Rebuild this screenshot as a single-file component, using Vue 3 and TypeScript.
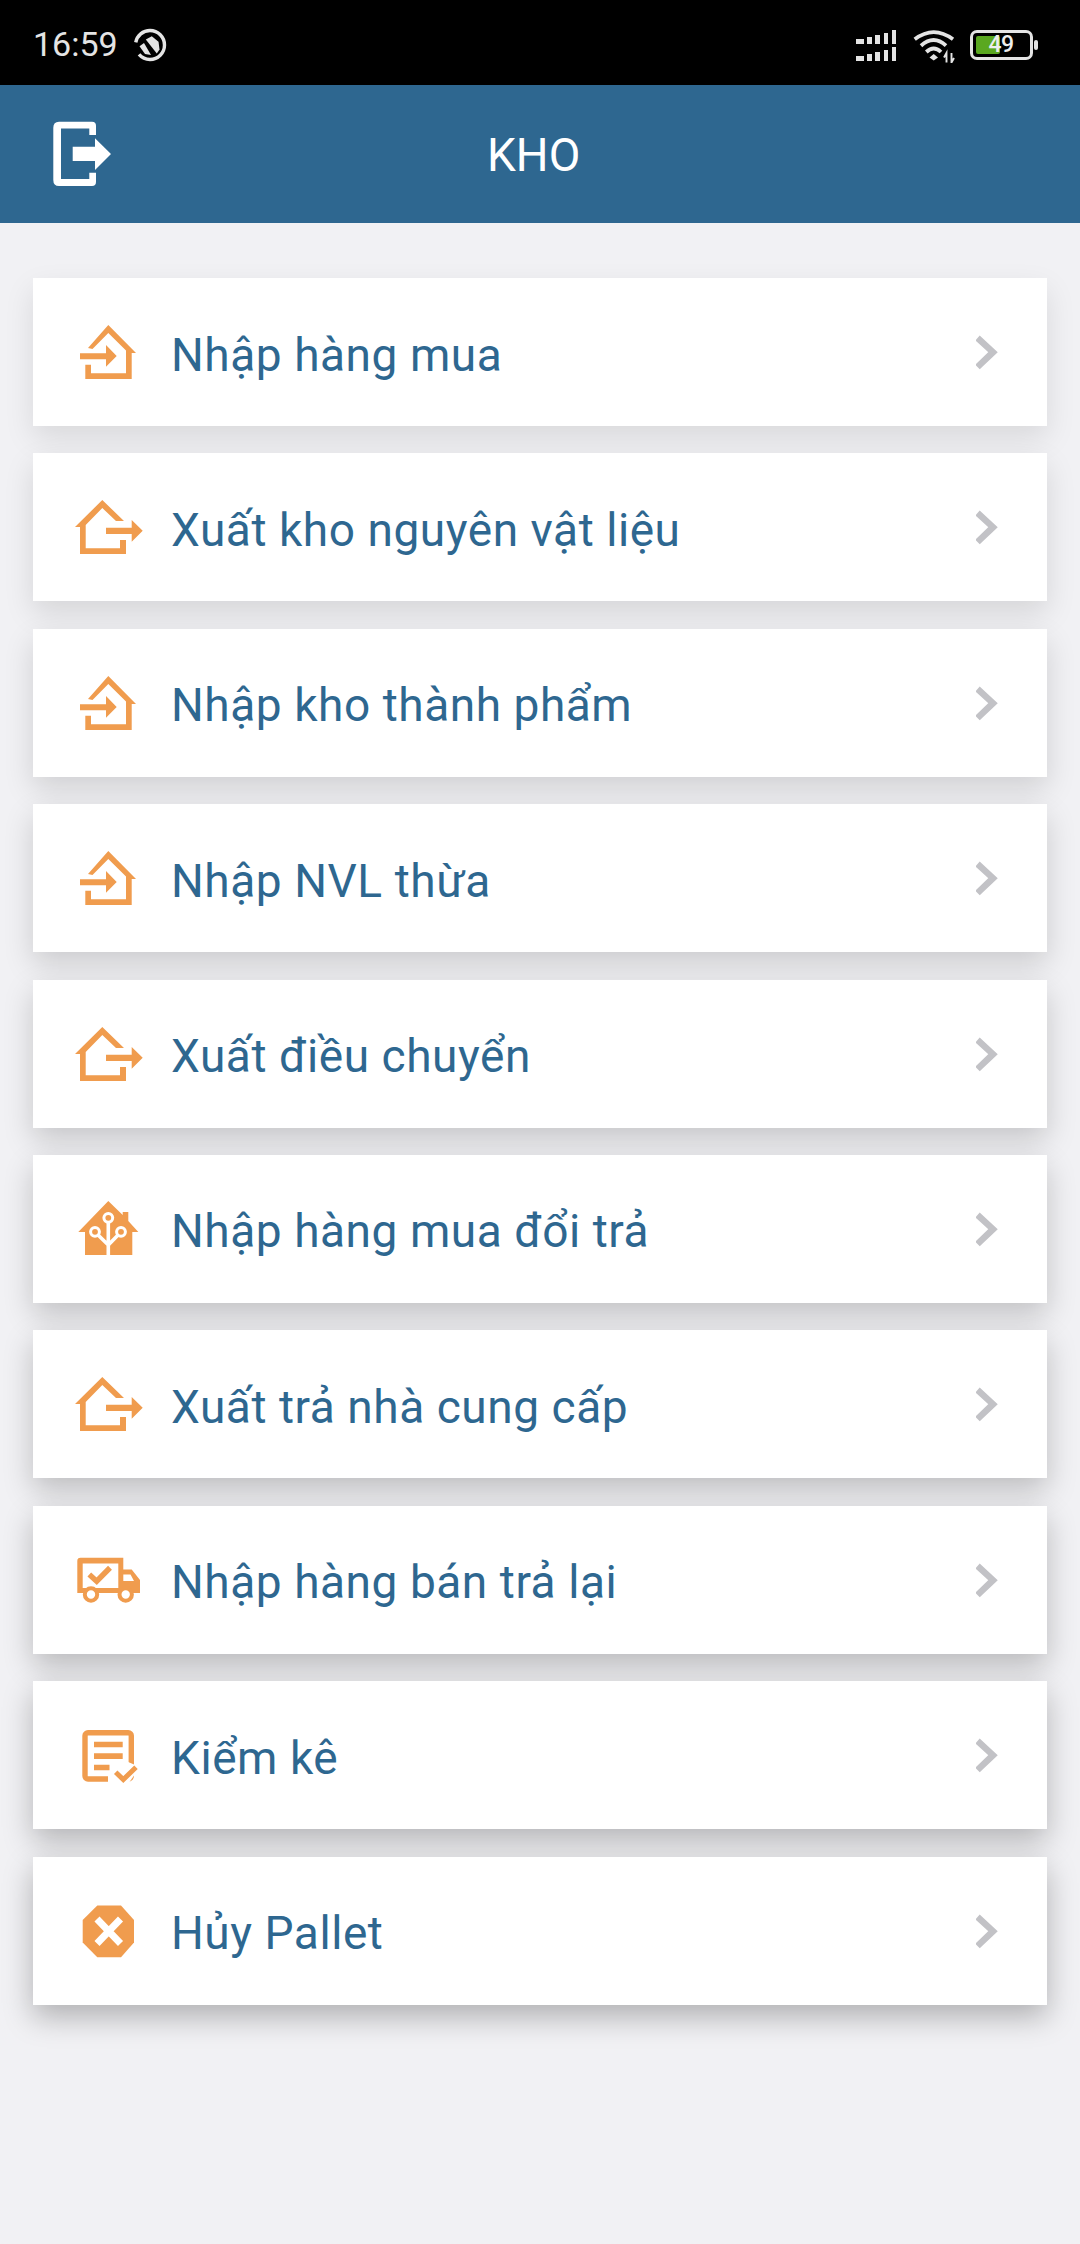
<script setup lang="ts">
type Kind = "in" | "out" | "home" | "truck" | "check" | "cancel";

const items: { label: string; icon: Kind }[] = [
  { label: "Nhập hàng mua", icon: "in" },
  { label: "Xuất kho nguyên vật liệu", icon: "out" },
  { label: "Nhập kho thành phẩm", icon: "in" },
  { label: "Nhập NVL thừa", icon: "in" },
  { label: "Xuất điều chuyển", icon: "out" },
  { label: "Nhập hàng mua đổi trả", icon: "home" },
  { label: "Xuất trả nhà cung cấp", icon: "out" },
  { label: "Nhập hàng bán trả lại", icon: "truck" },
  { label: "Kiểm kê", icon: "check" },
  { label: "Hủy Pallet", icon: "cancel" },
];

const bars = [0, 1, 2, 3, 4];

// shadows get heavier towards the bottom of the list
const shade = (i: number) => ({ "--shade": (0.1 + 0.019 * i).toFixed(3) });
</script>

<template>
  <div class="screen">
    <div class="status">
      <div class="status-left">
        <span class="time">16:59</span>
        <svg class="dnd" viewBox="0 0 34 34" width="34" height="34">
          <circle cx="17" cy="17" r="14.5" fill="none" stroke="#e4e4e4" stroke-width="3.4" stroke-dasharray="78 13" stroke-dashoffset="-48" />
          <path d="M12.8 11.5 L18.8 8.2 L25.5 13.8 L26.5 21.5 L23.8 25.5 Z" fill="#e4e4e4" />
          <path d="M6.5 18.2 L11 15 L18 27 L12 26 Z" fill="#e4e4e4" />
        </svg>
      </div>
      <div class="status-right">
        <div class="signal">
          <div v-for="row in 2" :key="row" class="signal-row">
            <i v-for="b in bars" :key="b" :class="'bar-' + b"></i>
          </div>
        </div>
        <svg class="wifi" viewBox="0 0 42 33" width="42" height="33">
          <path d="M1.7 9.3 Q20.7 -5 40 9.3" fill="none" stroke="#e4e4e4" stroke-width="3.8" />
          <path d="M8 15.7 Q20.7 4.5 33 15.7" fill="none" stroke="#e4e4e4" stroke-width="3.8" />
          <path d="M13.3 22 Q20.7 15 28 22" fill="none" stroke="#e4e4e4" stroke-width="3.8" />
          <path d="M16.5 27.5 L20.7 24 L25 27.5 L20.7 30.5 Z" fill="#e4e4e4" />
          <path d="M33.5 32.5 V23 L31 27.5 M38.5 23 V32.5 L41 28" fill="none" stroke="#e4e4e4" stroke-width="1.9" />
        </svg>
        <div class="battery">
          <div class="battery-body">
            <div class="battery-fill"></div>
            <span class="battery-num">49</span>
          </div>
          <div class="battery-tip"></div>
        </div>
      </div>
    </div>

    <header class="topbar">
      <svg class="logout" viewBox="0 0 60 66" width="60" height="66">
        <path d="M7 .7 H40 Q44 .7 44 4.7 V14 H37.3 V7.5 H9 V58 H37.3 V51.7 H44 V61 Q44 65 40 65 H7 Q1.3 65 1.3 59 V6.7 Q1.3 .7 7 .7 Z" fill="#fff" />
        <path d="M20.7 25.7 H43 V17.3 L59 33 L43 49 V40 H20.7 Z" fill="#fff" />
      </svg>
      <h1 class="title">KHO</h1>
    </header>

    <main class="list">
      <div v-for="(item, i) in items" :key="item.label" class="card" :style="shade(i)">
        <svg class="icon" viewBox="0 0 80 80" width="80" height="80">
          <g v-if="item.icon === 'in'" fill="#f09c4e">
            <path d="M18 36 L38.3 13 L66 41 H61.7 V67 H15.3 V52.7 H21 V61.3 H56 V38.5 L38.3 21 L22.5 37 Z" />
            <path d="M10 41.3 H36 V33 L46.7 44 L36 54.7 V47.3 H10 Z" />
          </g>
          <g v-else-if="item.icon === 'out'" fill="#f09c4e">
            <path d="M5 40 L32.3 13 L54 34 H46 L32.3 21 L15.7 38 V61.3 H50 V53 H56 V67 H10 V40 Z" />
            <path d="M36 40.7 H61.7 V33 L72.7 43.7 L61.7 54.7 V47 H36 Z" />
          </g>
          <g v-else-if="item.icon === 'home'">
            <path d="M38.3 12 L52.7 26 V23 H58.3 V32 L68.3 43 H62.3 V66 H15 V43 H8.3 Z" fill="#f09c4e" />
            <path d="M38.3 29 V66 M25 43 L38.3 56 M51 43 L38.3 56" fill="none" stroke="#fff" stroke-width="3.6" />
            <circle cx="38.3" cy="28.8" r="4.4" fill="#f09c4e" stroke="#fff" stroke-width="3" />
            <circle cx="25" cy="42.8" r="4.4" fill="#f09c4e" stroke="#fff" stroke-width="3" />
            <circle cx="51" cy="42.8" r="4.4" fill="#f09c4e" stroke="#fff" stroke-width="3" />
          </g>
          <g v-else-if="item.icon === 'truck'">
            <path d="M10.5 17.8 H53.3 V29.5 H61.7 L70 40 V53 H7.3 V21 Q7.3 17.8 10.5 17.8 Z" fill="#f09c4e" />
            <path d="M12.7 23.5 H48.3 V48 H12.7 Z" fill="#fff" />
            <path d="M53.3 34.5 H60.5 L64 41 H53.3 Z" fill="#fff" />
            <path d="M19.3 34.5 L26.7 41.2 L40 27.8" fill="none" stroke="#f09c4e" stroke-width="5.5" />
            <circle cx="21" cy="54.5" r="6.2" fill="#fff" stroke="#f09c4e" stroke-width="4" />
            <circle cx="55.7" cy="54.5" r="6.2" fill="#fff" stroke="#f09c4e" stroke-width="4" />
          </g>
          <g v-else-if="item.icon === 'check'">
            <rect x="15" y="17.7" width="46.3" height="46.3" rx="3" fill="none" stroke="#f09c4e" stroke-width="5.4" />
            <path d="M24 26.7 H52.7 V32.3 H24 Z M24 38.3 H52.7 V44 H24 Z M24 49.7 H39.5 V55.3 H24 Z" fill="#f09c4e" />
            <path d="M38 58 L51 44 L70 52 L56 72 H38 Z" fill="#fff" />
            <path d="M45.7 57.3 L53.3 64.5 L66 52.3" fill="none" stroke="#f09c4e" stroke-width="5" />
          </g>
          <g v-else>
            <path d="M27.3 14.5 H51 L64 29 V51.5 L51 66.2 H27.3 L12.7 51.5 V29 Z" fill="#f09c4e" />
            <path d="M27 28 L50.5 52.5 M50.5 28 L27 52.5" fill="none" stroke="#fff" stroke-width="7" />
          </g>
        </svg>
        <span class="label">{{ item.label }}</span>
        <svg class="chevron" viewBox="0 0 24 36" width="24" height="36">
          <path d="M1.5 4 L17 18.2 L1.5 33" fill="none" stroke="#c2c2c6" stroke-width="6.5" />
        </svg>
      </div>
    </main>
  </div>
</template>

<style scoped>
.screen {
  width: 1080px;
  height: 2244px;
  background: #f1f1f4;
  font-family: Roboto, "Noto Sans", sans-serif;
  overflow: hidden;
}

.status {
  height: 85px;
  background: #000;
  display: flex;
  align-items: center;
  justify-content: space-between;
  padding: 0 42px 0 33px;
  box-sizing: border-box;
}

.status-left,
.status-right {
  display: flex;
  align-items: center;
}

.time {
  color: #e4e4e4;
  font-size: 34px;
  line-height: 1;
  margin-right: 15px;
  margin-top: 2px;
}

.dnd {
  margin-top: 4px;
}

.signal {
  display: flex;
  flex-direction: column;
  gap: 3.7px;
  margin-right: 16.7px;
  margin-top: 6px;
}

.signal-row {
  display: flex;
  align-items: flex-end;
  gap: 3.5px;
}

.signal-row i {
  display: block;
  width: 4.5px;
  background: #e4e4e4;
}

.signal-row .bar-0 {
  width: 8px;
  height: 4.6px;
}

.signal-row .bar-1 {
  height: 7px;
}

.signal-row .bar-2 {
  width: 5px;
  height: 9px;
}

.signal-row .bar-3 {
  height: 11px;
}

.signal-row .bar-4 {
  height: 13.3px;
}

.wifi {
  margin-right: 15px;
  margin-top: 7px;
}

.battery {
  display: flex;
  align-items: center;
  gap: 1.3px;
  margin-top: 5px;
}

.battery-body {
  position: relative;
  width: 62.7px;
  height: 30px;
  box-sizing: border-box;
  border: 3.3px solid #e4e4e4;
  border-radius: 7px;
  padding: 3.4px;
}

.battery-fill {
  width: 23.3px;
  height: 100%;
  background: #5aa820;
  border-radius: 2px;
}

.battery-num {
  position: absolute;
  left: 15.5px;
  top: 1px;
  color: #eeeeee;
  font-size: 23px;
  font-weight: 500;
  letter-spacing: -0.5px;
  line-height: 22px;
}

.battery-tip {
  width: 4px;
  height: 10px;
  background: #e4e4e4;
  border-radius: 2px;
}

.topbar {
  height: 138px;
  background: #2e6790;
  display: flex;
  align-items: center;
  padding-left: 52px;
  box-sizing: border-box;
}

.title {
  margin: 2px 0 0 375px;
  color: #fff;
  font-size: 46px;
  font-weight: 400;
  line-height: 1;
}

.list {
  display: flex;
  flex-direction: column;
  gap: 27.4px;
  padding: 55px 33px 0;
}

.card {
  height: 148px;
  background: #fff;
  display: flex;
  align-items: center;
  padding: 0 47px 0 37px;
  box-shadow: 0 12px 28px rgba(0, 0, 0, var(--shade));
}

.icon {
  flex-shrink: 0;
}

.label {
  flex: 1;
  margin: 5px 0 0 21px;
  color: #2e6790;
  font-size: 46px;
  letter-spacing: 0.55px;
  line-height: 1;
}

.chevron {
  flex-shrink: 0;
}
</style>
